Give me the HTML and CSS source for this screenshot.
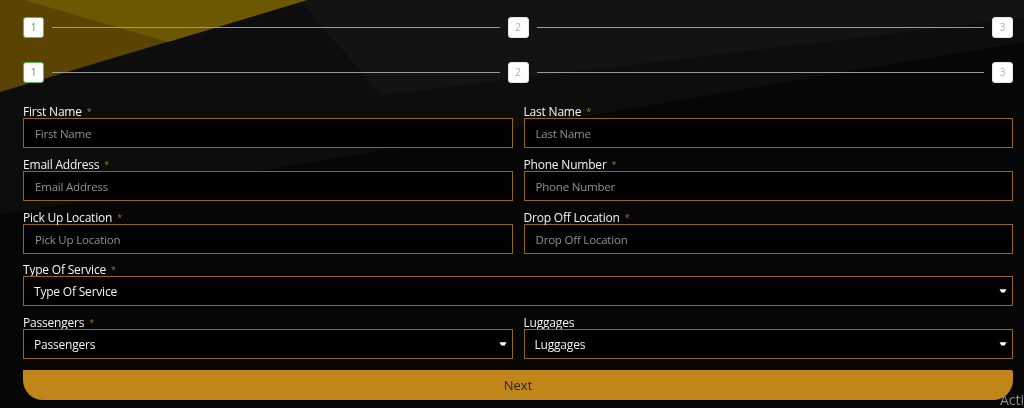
FILE: index.html
```html
<!DOCTYPE html>
<html>
  <head>
    <meta charset="UTF-8" />
    <title>Book a Ride</title>
    <link rel="stylesheet" href="styles.css">
  </head>
  <body>
    <div class="backdrop">
      <svg width="1024" height="408" viewBox="0 0 1024 408">
        <rect width="1024" height="408" fill="#060606" />
        <polygon points="0,0 1024,0 1024,42 0,215" fill="#0d0d0d" />
        <polygon points="300,0 1024,0 1024,18 380,95" fill="#131313" />
        <polygon points="0,0 307,0 0,92" fill="#5a4303" />
        <polygon points="24,0 307,0 168,42" fill="#6b5801" />
      </svg>
    </div>

    <main class="wizard">
      <ol class="steps">
        <li class="step active">1</li>
        <li class="bar"></li>
        <li class="step">2</li>
        <li class="bar"></li>
        <li class="step">3</li>
      </ol>
      <ol class="steps">
        <li class="step active">1</li>
        <li class="bar"></li>
        <li class="step">2</li>
        <li class="bar"></li>
        <li class="step">3</li>
      </ol>

      <form class="form">
        <div class="field">
          <label>First Name <span class="req">*</span></label>
          <input type="text" placeholder="First Name" />
        </div>
        <div class="field">
          <label>Last Name <span class="req">*</span></label>
          <input type="text" placeholder="Last Name" />
        </div>
        <div class="field">
          <label>Email Address <span class="req">*</span></label>
          <input type="text" placeholder="Email Address" />
        </div>
        <div class="field">
          <label>Phone Number <span class="req">*</span></label>
          <input type="text" placeholder="Phone Number" />
        </div>
        <div class="field">
          <label>Pick Up Location <span class="req">*</span></label>
          <input type="text" placeholder="Pick Up Location" />
        </div>
        <div class="field">
          <label>Drop Off Location <span class="req">*</span></label>
          <input type="text" placeholder="Drop Off Location" />
        </div>
        <div class="field wide">
          <label>Type Of Service <span class="req">*</span></label>
          <div class="select">
            <select>
              <option>Type Of Service</option>
            </select>
            <svg class="caret" width="8" height="4" viewBox="0 0 8 4"><path d="M0.5 0.3H7.5L5.6 3.4H2.4Z" fill="#fff" /></svg>
          </div>
        </div>
        <div class="field">
          <label>Passengers <span class="req">*</span></label>
          <div class="select">
            <select>
              <option>Passengers</option>
            </select>
            <svg class="caret" width="8" height="4" viewBox="0 0 8 4"><path d="M0.5 0.3H7.5L5.6 3.4H2.4Z" fill="#fff" /></svg>
          </div>
        </div>
        <div class="field">
          <label>Luggages</label>
          <div class="select">
            <select>
              <option>Luggages</option>
            </select>
            <svg class="caret" width="8" height="4" viewBox="0 0 8 4"><path d="M0.5 0.3H7.5L5.6 3.4H2.4Z" fill="#fff" /></svg>
          </div>
        </div>
        <button type="button" class="next">Next</button>
      </form>
    </main>

    <div class="watermark">Acti</div>
  </body>
</html>
```

FILE: styles.css
```css
html,
body {
  height: 408px;
  overflow: hidden;
}
body {
  margin: 0;
  font-family: "Open Sans", Arial, sans-serif;
  background-color: #060606;
  color: #f2f2f2;
}
.backdrop {
  position: fixed;
  top: 0;
  left: 0;
  z-index: -1;
  line-height: 0;
}
.wizard {
  padding: 17px 11px 0 23px;
}
.steps {
  display: flex;
  align-items: center;
  gap: 8px;
  list-style: none;
  margin: 0 0 24px 0;
  padding: 0;
}
.steps:last-of-type {
  margin-bottom: 12px;
}
.step {
  width: 19px;
  height: 19px;
  border: 1px solid #e6e6e6;
  border-radius: 3px;
  background-color: #fff;
  color: #b0b0b0;
  font-size: 10px;
  line-height: 19px;
  text-align: center;
}
.step.active {
  border-color: #5cb85c;
  color: #4a9e4a;
}
.bar {
  flex: 1;
  height: 1px;
  background-color: #9a9a9a;
}
.form {
  display: grid;
  grid-template-columns: 1fr 1fr;
  column-gap: 11px;
}
.field {
  padding-top: 8px;
}
.field.wide {
  grid-column: 1 / 3;
  padding-top: 7px;
}
label {
  display: block;
  height: 15px;
  font-size: 12px;
  line-height: 17px;
  color: #f4f4f4;
  letter-spacing: -0.2px;
}
.req {
  color: #a8761c;
  font-size: 9px;
  vertical-align: top;
  margin-left: 2px;
}
input[type="text"],
select {
  box-sizing: border-box;
  display: block;
  width: 100%;
  height: 30px;
  margin: 0;
  border: 1px solid #93670f;
  border-radius: 0;
  background-color: #010101;
  font-family: "Open Sans", Arial, sans-serif;
  outline: none;
}
input[type="text"] {
  padding: 0 11px;
  font-size: 11.5px;
  color: #ddd;
  letter-spacing: -0.2px;
}
input::placeholder {
  color: #919191;
}
.select {
  position: relative;
}
select {
  appearance: none;
  -webkit-appearance: none;
  padding: 0 10px;
  font-size: 12px;
  color: #f2f2f2;
  letter-spacing: -0.2px;
}
.caret {
  position: absolute;
  right: 6px;
  top: 13px;
}
.next {
  grid-column: 1 / 3;
  height: 30px;
  margin-top: 11px;
  border: none;
  border-radius: 0 2px 20px 20px;
  background-color: #c0861a;
  color: #262626;
  font-family: "Open Sans", Arial, sans-serif;
  font-size: 13px;
  cursor: pointer;
}
.watermark {
  position: absolute;
  left: 1000px;
  top: 392px;
  font-size: 14px;
  line-height: 15px;
  color: #8f8f8f;
  white-space: nowrap;
}
```
